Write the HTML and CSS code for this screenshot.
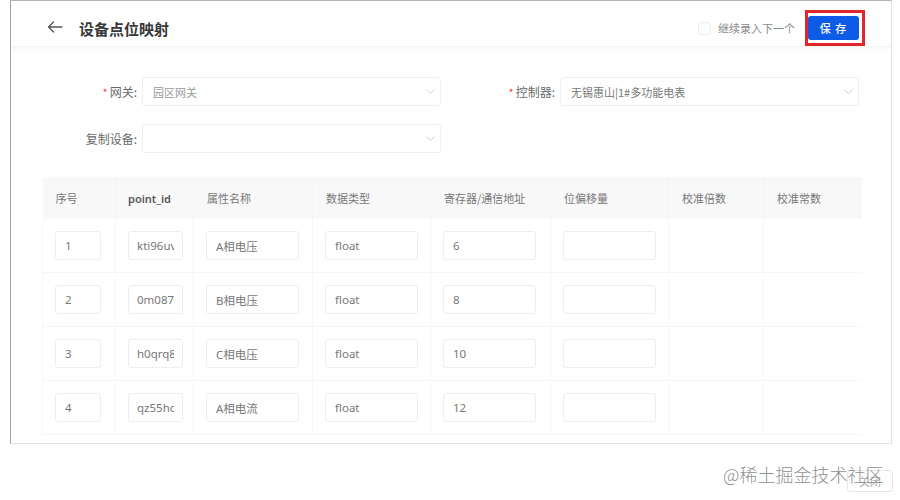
FILE: index.html
```html
<!DOCTYPE html>
<html lang="zh-CN">
<head>
<meta charset="utf-8">
<title>设备点位映射</title>
<link rel="stylesheet" href="styles.css">
</head>
<body>
<div class="modal">
  <div class="header">
    <div class="header-left">
      <svg class="back" width="16" height="12" viewBox="0 0 16 12"><path d="M15 6H1.5M6.5 1L1.5 6l5 5" fill="none" stroke="#555" stroke-width="1.3" stroke-linecap="round" stroke-linejoin="round"/></svg>
      <span class="title">设备点位映射</span>
    </div>
    <div class="header-right">
      <span class="checkbox"></span>
      <span class="check-text">继续录入下一个</span>
      <span class="highlight"><button class="btn-save">保 存</button></span>
    </div>
  </div>

  <div class="form">
    <div class="label"><span class="req">*</span> 网关:</div>
    <div class="select"><span class="val">园区网关</span><svg class="chev" width="9" height="5" viewBox="0 0 9 5"><path d="M0.5 0.5l4 4 4-4" fill="none" stroke="#c8c8c8" stroke-width="0.9"/></svg></div>
    <div class="label"><span class="req">*</span> 控制器:</div>
    <div class="select"><span class="val dark">无锡惠山|1#多功能电表</span><svg class="chev" width="9" height="5" viewBox="0 0 9 5"><path d="M0.5 0.5l4 4 4-4" fill="none" stroke="#c8c8c8" stroke-width="0.9"/></svg></div>
    <div class="label">复制设备:</div>
    <div class="select"><span class="val"></span><svg class="chev" width="9" height="5" viewBox="0 0 9 5"><path d="M0.5 0.5l4 4 4-4" fill="none" stroke="#c8c8c8" stroke-width="0.9"/></svg></div>
  </div>

  <table class="grid">
    <colgroup>
      <col class="c1"><col class="c2"><col class="c3"><col class="c4">
      <col class="c5"><col class="c6"><col class="c7"><col class="c8">
    </colgroup>
    <thead>
      <tr>
        <th>序号</th><th class="en">point_id</th><th>属性名称</th><th>数据类型</th>
        <th>寄存器/通信地址</th><th>位偏移量</th><th>校准倍数</th><th>校准常数</th>
      </tr>
    </thead>
    <tbody>
      <tr>
        <td><input class="in w1" value="1"></td><td><input class="in w2" value="kti96uv"></td>
        <td><input class="in w3" value="A相电压"></td><td><input class="in w3" value="float"></td>
        <td><input class="in w3" value="6"></td><td><input class="in w3" value=""></td><td></td><td></td>
      </tr>
      <tr>
        <td><input class="in w1" value="2"></td><td><input class="in w2" value="0m087"></td>
        <td><input class="in w3" value="B相电压"></td><td><input class="in w3" value="float"></td>
        <td><input class="in w3" value="8"></td><td><input class="in w3" value=""></td><td></td><td></td>
      </tr>
      <tr>
        <td><input class="in w1" value="3"></td><td><input class="in w2" value="h0qrq8"></td>
        <td><input class="in w3" value="C相电压"></td><td><input class="in w3" value="float"></td>
        <td><input class="in w3" value="10"></td><td><input class="in w3" value=""></td><td></td><td></td>
      </tr>
      <tr>
        <td><input class="in w1" value="4"></td><td><input class="in w2" value="qz55hc"></td>
        <td><input class="in w3" value="A相电流"></td><td><input class="in w3" value="float"></td>
        <td><input class="in w3" value="12"></td><td><input class="in w3" value=""></td><td></td><td></td>
      </tr>
    </tbody>
  </table>
</div>

<div class="footer">
  <button class="btn-close">关闭</button>
</div>
<div class="watermark">@稀土掘金技术社区</div>
</body>
</html>
```

FILE: styles.css
```css
html, body {
  margin: 0;
  padding: 0;
  background: #fff;
}
body {
  font-family: "Noto Sans", "Noto Sans CJK SC", sans-serif;
  color: #666;
  position: relative;
  width: 900px;
  height: 500px;
  overflow: hidden;
}
.modal {
  margin-left: 10px;
  width: 882px;
  height: 444px;
  box-sizing: border-box;
  border-left: 1.5px solid #a2a2a2;
  border-top: 1px solid #b4b4b4;
  border-right: 1px solid #e2e2e2;
  border-bottom: 1px solid #e4e4e4;
  overflow: hidden;
}
.header {
  height: 46px;
  box-sizing: border-box;
  padding: 9px 26px 0 36px;
  display: flex;
  align-items: center;
  justify-content: space-between;
  border-bottom: 1px solid #f3f3f3;
  box-shadow: 0 3px 5px rgba(0, 0, 0, 0.03);
}
.header-left {
  display: flex;
  align-items: center;
  gap: 16px;
}
.back { display: block; margin-top: -2px; }
.title {
  font-family: "Noto Sans CJK SC", sans-serif;
  font-size: 15px;
  font-weight: 700;
  color: #383838;
}
.header-right {
  display: flex;
  align-items: center;
}
.checkbox {
  width: 11px;
  height: 11px;
  border: 1px solid #ececec;
  border-radius: 4px;
  margin-right: 7px;
}
.check-text {
  font-family: "Noto Sans CJK SC", sans-serif;
  font-size: 11px;
  color: #8a8a8a;
  margin-right: 10px;
}
.highlight {
  display: flex;
  border: 3px solid #e3262b;
  padding: 3px 3px 3px 0;
}
.btn-save {
  width: 51px;
  height: 24px;
  border: none;
  border-radius: 3px;
  background: #0d5be6;
  color: #fff;
  font-family: "Noto Sans CJK SC", sans-serif;
  font-size: 11px;
  font-weight: 500;
  padding: 0;
  letter-spacing: 1px;
}
.form {
  margin-top: 30px;
  display: grid;
  grid-template-columns: 131px 299px 119px 299px;
  grid-auto-rows: 29px;
  row-gap: 18px;
}
.label {
  font-family: "Noto Sans CJK SC", sans-serif;
  font-size: 12px;
  color: #6a6a6a;
  padding-right: 5px;
  display: flex;
  align-items: center;
  justify-content: flex-end;
}
.req {
  color: #f04a4a;
  margin-right: 2px;
  font-size: 11px;
}
.select {
  border: 1px solid #efefef;
  border-radius: 3px;
  box-sizing: border-box;
  display: flex;
  align-items: center;
  justify-content: space-between;
  padding: 0 5px 0 10px;
}
.val {
  font-family: "Noto Sans CJK SC", sans-serif;
  font-size: 11px;
  color: #9a9a9a;
}
.val.dark { color: #777; }
.chev { display: block; }
.grid {
  margin: 24px 0 0 31px;
  width: 819px;
  table-layout: fixed;
  border-collapse: collapse;
}
.c1 { width: 73px; }
.c2 { width: 78px; }
.c3 { width: 119px; }
.c4 { width: 118px; }
.c5 { width: 120px; }
.c6 { width: 118px; }
.c7 { width: 95px; }
.c8 { width: 98px; }
.grid th {
  height: 42px;
  background: #f8f8f9;
  text-align: left;
  font-family: "Noto Sans CJK SC", sans-serif;
  font-size: 11px;
  font-weight: 400;
  color: #777;
  padding: 0 0 0 13px;
  border-right: 1px solid #f5f5f5;
}
.grid th:last-child { border-right: none; }
.grid th.en {
  font-family: "Noto Sans", sans-serif;
  font-weight: 600;
  color: #555;
  padding-left: 12px;
}
.grid td {
  height: 53px;
  padding: 0 0 0 12px;
  border-right: 1px solid #f6f6f6;
  border-bottom: 1px solid #f6f6f6;
}
.grid td:first-child { border-left: 1px solid #f8f8f8; }
.grid td:last-child { border-right: none; }
.in {
  display: block;
  height: 29px;
  box-sizing: border-box;
  border: 1px solid #eeeeee;
  border-radius: 3px;
  padding: 0 9px;
  font-family: "Noto Sans", "Noto Sans CJK SC", sans-serif;
  font-size: 11.5px;
  color: #777;
  background: #fff;
  outline: none;
}
.w1 { width: 46px; }
.w2 { width: 55px; padding: 0 8px; }
.w3 { width: 93px; }
.footer {
  display: flex;
  justify-content: flex-end;
  margin-top: 26px;
  padding-right: 7px;
}
.btn-close {
  width: 46px;
  height: 22px;
  border: 1px solid #e6e6e6;
  border-radius: 3px;
  background: #fff;
  color: #aaa;
  font-family: "Noto Sans CJK SC", sans-serif;
  font-size: 11px;
  padding: 0;
}
.watermark {
  position: absolute;
  left: 723px;
  top: 462px;
  font-family: "Noto Sans CJK SC", sans-serif;
  font-size: 18px;
  line-height: 24px;
  font-weight: 300;
  color: rgba(130, 130, 130, 0.9);
  white-space: nowrap;
}
```
